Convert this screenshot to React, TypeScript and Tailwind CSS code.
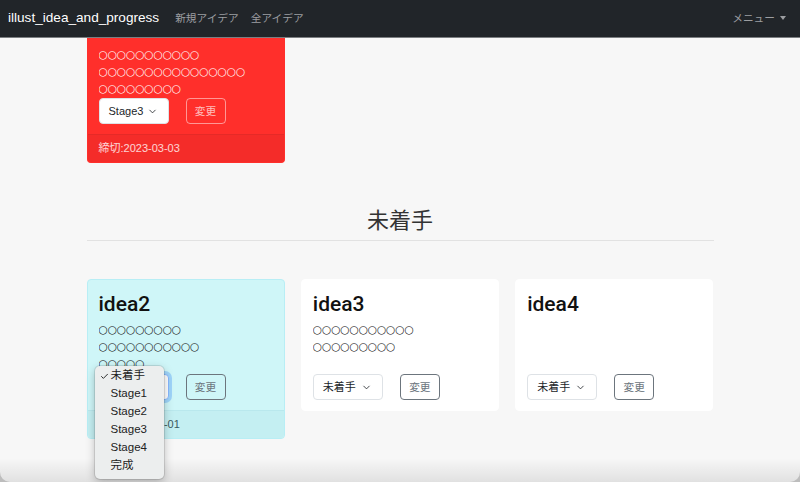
import { ChevronDown, Check } from 'lucide-react';

type Idea = {
  title?: string;
  lines: string[];
  stage: string;
  deadline?: string;
  tone: 'red' | 'info' | 'plain';
  open?: boolean;
};

const stages = ['未着手', 'Stage1', 'Stage2', 'Stage3', 'Stage4', '完成'];

const toneStyles = {
  red: {
    card: 'bg-[#ff2f2b] border-[#ff2f2b] text-white',
    footer: 'bg-[#f42c29] border-[#e52a27] text-white/80',
    button: 'border-white/50 text-white/70',
  },
  info: {
    card: 'bg-[#cff6f8] border-[#b8eef5] text-[#111]',
    footer: 'bg-[#c4eff2] border-[#b9e8ed] text-[#3a5a5e]',
    button: 'border-[#6c757d] text-[#6c757d]',
  },
  plain: {
    card: 'bg-white border-white text-[#111]',
    footer: 'bg-[#f4f4f4] border-[#e3e3e3] text-[#555]',
    button: 'border-[#6c757d] text-[#6c757d]',
  },
};

function StageMenu({ current }: { current: string }) {
  return (
    <div className="absolute left-[7px] top-[86px] z-10 w-[69px] rounded-[5px] bg-[#eceeee] pt-[1px] pb-[4px] shadow-[0_3px_10px_rgba(0,0,0,0.25)] ring-1 ring-black/10">
      {stages.map((s) => (
        <div key={s} className="flex h-[18px] items-center text-[11.5px] text-[#222]">
          <span className="flex w-[16px] justify-end pr-[2px]">
            {s === current && <Check size={9} strokeWidth={2.5} />}
          </span>
          <span>{s}</span>
        </div>
      ))}
    </div>
  );
}

function IdeaCard({ idea }: { idea: Idea }) {
  const t = toneStyles[idea.tone];
  const top = !idea.title;
  return (
    <div className={`relative border ${t.card} ${top ? 'rounded-b-[4px] border-t-0' : 'rounded-[4px]'}`}>
      <div className={`px-[11px] pb-[10px] ${top ? 'pt-[8px]' : 'pt-[11px]'}`}>
        {idea.title && (
          <div className="mb-[4px] h-[26px] font-['Roboto',sans-serif] text-[21px] leading-[26px] font-medium">
            {idea.title}
          </div>
        )}
        <div className="h-[51px] overflow-hidden font-['DejaVu_Sans',sans-serif] text-[10.5px] leading-[17px]">
          {idea.lines.map((l, i) => (
            <div key={i}>{l}</div>
          ))}
        </div>
        <div className={`flex items-center gap-[17px] ${top ? 'mt-[1px]' : 'mt-[2px]'}`}>
          <div
            className={`flex h-[26px] w-[70px] items-center justify-between rounded-[4px] border bg-white pl-[9px] pr-[10px] text-[11px] text-[#212529] ${
              idea.open ? 'border-[#86b7fe] ring-[3px] ring-[#0d6efd]/25' : 'border-[#dee2e6]'
            }`}
          >
            <span>{idea.stage}</span>
            <ChevronDown size={11} strokeWidth={1.8} />
          </div>
          <button className={`h-[26px] w-[40px] rounded-[4px] border text-[10.7px] ${t.button}`}>変更</button>
        </div>
      </div>
      {idea.deadline && (
        <div className={`flex h-[28px] items-center rounded-b-[4px] border-t px-[11px] text-[11px] ${t.footer}`}>
          締切:{idea.deadline}
        </div>
      )}
      {idea.open && <StageMenu current={idea.stage} />}
    </div>
  );
}

const inProgress: Idea[] = [
  {
    lines: ['○○○○○○○○○○○', '○○○○○○○○○○○○○○○○', '○○○○○○○○○'],
    stage: 'Stage3',
    deadline: '2023-03-03',
    tone: 'red',
  },
];

const notStarted: Idea[] = [
  {
    title: 'idea2',
    lines: ['○○○○○○○○○', '○○○○○○○○○○○', '○○○○○'],
    stage: '未着手',
    deadline: '2023-04-01',
    tone: 'info',
    open: true,
  },
  { title: 'idea3', lines: ['○○○○○○○○○○○', '○○○○○○○○○'], stage: '未着手', tone: 'plain' },
  { title: 'idea4', lines: [], stage: '未着手', tone: 'plain' },
];

export default function App() {
  return (
    <div className="h-[482px] bg-[#bdbdbd] font-['Liberation_Sans','Noto_Sans_CJK_JP',sans-serif]">
      <div className="relative h-[482px] overflow-hidden rounded-b-[10px] bg-[#f7f7f7]">
        <nav className="flex h-[38px] items-center border-b border-[#7b7e81] bg-[#212529] pl-[8px] pr-[14px]">
          <span className="text-[13.6px] text-white">illust_idea_and_progress</span>
          <div className="ml-[16px] flex gap-[12px] text-[10.7px] text-[#9c9ea1]">
            <span>新規アイデア</span>
            <span>全アイデア</span>
          </div>
          <div className="ml-auto flex items-center gap-[5px] text-[10.7px] text-[#9c9ea1]">
            <span>メニュー</span>
            <span className="h-0 w-0 border-x-[3.5px] border-t-[4px] border-x-transparent border-t-[#9c9ea1]" />
          </div>
        </nav>

        <main className="mx-auto w-[627px]">
          <div className="grid grid-cols-3 items-start gap-x-[16px]">
            {inProgress.map((i, k) => (
              <IdeaCard key={k} idea={i} />
            ))}
          </div>

          <h2 className="mt-[45px] text-center text-[22px] leading-[26px] text-[#333]">未着手</h2>
          <div className="mt-[6px] border-t border-[#e2e2e2]" />

          <div className="mt-[38px] grid grid-cols-3 items-start gap-x-[16px]">
            {notStarted.map((i, k) => (
              <IdeaCard key={k} idea={i} />
            ))}
          </div>
        </main>

        <div className="pointer-events-none absolute inset-x-0 bottom-0 h-[24px] bg-gradient-to-b from-transparent to-black/[0.09]" />
      </div>
    </div>
  );
}
